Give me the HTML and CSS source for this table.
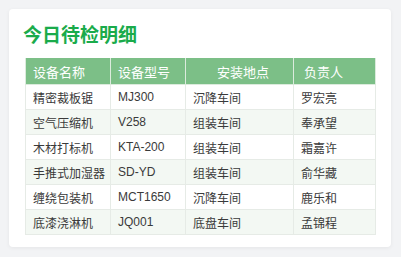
FILE: index.html
```html
<!DOCTYPE html>
<html lang="zh">
<head>
<meta charset="utf-8">
<link rel="stylesheet" href="styles.css">
</head>
<body>
<div class="card">
  <h1 class="title">今日待检明细</h1>
  <table class="grid">
    <colgroup>
      <col class="c1"><col class="c2"><col class="c3"><col class="c4">
    </colgroup>
    <thead>
      <tr><th>设备名称</th><th>设备型号</th><th class="center">安装地点</th><th class="wide">负责人</th></tr>
    </thead>
    <tbody>
      <tr><td>精密裁板锯</td><td>MJ300</td><td>沉降车间</td><td>罗宏亮</td></tr>
      <tr><td>空气压缩机</td><td>V258</td><td>组装车间</td><td>奉承望</td></tr>
      <tr><td>木材打标机</td><td>KTA-200</td><td>组装车间</td><td>霜嘉许</td></tr>
      <tr><td>手推式加湿器</td><td>SD-YD</td><td>组装车间</td><td>俞华藏</td></tr>
      <tr><td>缠绕包装机</td><td>MCT1650</td><td>沉降车间</td><td>鹿乐和</td></tr>
      <tr><td>底漆浇淋机</td><td>JQ001</td><td>底盘车间</td><td>孟锦程</td></tr>
    </tbody>
  </table>
</div>
</body>
</html>
```
FILE: styles.css
```css
html, body {
  margin: 0;
  padding: 0;
}
body {
  background: #f2f3f5;
  padding: 9px 10px 11px 9px;
  font-family: "Liberation Sans", "Noto Sans CJK SC", sans-serif;
}
.card {
  background: #fff;
  border-radius: 4px;
  box-shadow: 0 1px 4px rgba(0, 0, 0, 0.06);
  padding: 14px 16px 12px 16px;
}
.title {
  margin: 0 0 9px -2px;
  font-size: 19px;
  line-height: 26px;
  font-weight: bold;
  color: #1aab4b;
}
.grid {
  border-collapse: collapse;
  table-layout: fixed;
  width: 350px;
}
.c1 { width: 85px; }
.c2 { width: 75px; }
.c3 { width: 108px; }
.c4 { width: 82px; }
th {
  background: #7cbf87;
  color: #fff;
  font-weight: normal;
  font-size: 13px;
  text-align: left;
  height: 26px;
  padding: 0 0 0 7px;
  border: 1px solid #dcebdd;
  border-top: none;
}
th.center { text-align: center; }
th.wide { padding-left: 10px; }
td {
  font-size: 12px;
  color: #3a3a3a;
  height: 24px;
  padding: 0 0 0 7px;
  border: 1px solid #e6ebe6;
}
tbody tr:nth-child(even) td {
  background: #f3f8f3;
}
```
